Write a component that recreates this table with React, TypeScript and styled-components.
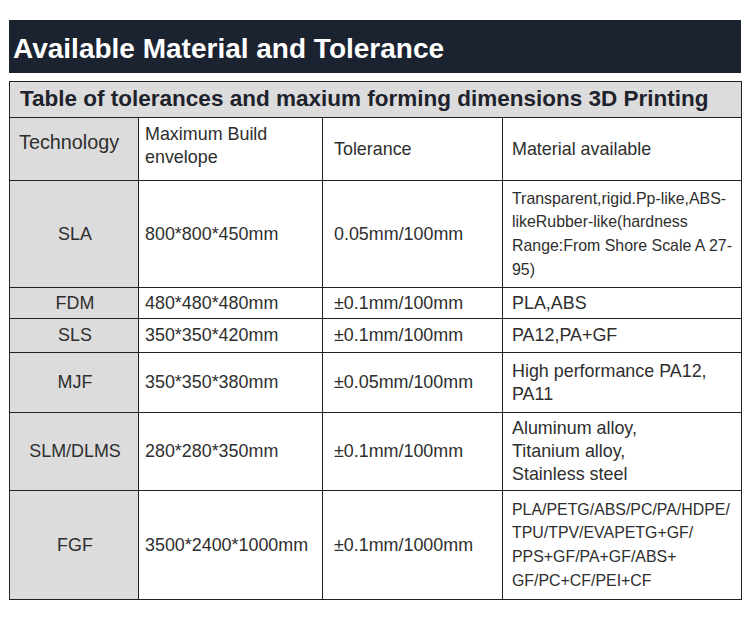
import styled, { createGlobalStyle } from "styled-components";

const GlobalStyle = createGlobalStyle`
  body {
    margin: 0;
    background: #ffffff;
    font-family: "Liberation Sans", Arial, sans-serif;
  }
`;

const Page = styled.div`
  width: 750px;
  height: 617px;
  padding: 20px 9px 0;
  box-sizing: border-box;
  background: #ffffff;
`;

const TitleBar = styled.h1`
  margin: 0;
  height: 53px;
  background: #1c2330;
  color: #ffffff;
  font-size: 28px;
  font-weight: 700;
  line-height: 57px;
  padding-left: 4px;
  box-sizing: border-box;
`;

const Table = styled.table`
  margin-top: 8px;
  width: 732px;
  border-collapse: collapse;
  table-layout: fixed;
  color: #2e2e2e;
  font-size: 17.9px;
`;

const Caption = styled.th`
  background: #dcdcdc;
  border: 1px solid #1e1f28;
  height: 36px;
  padding: 0 0 2px 10px;
  text-align: left;
  font-size: 22.5px;
  font-weight: 700;
  color: #1e222c;
  box-sizing: border-box;
  white-space: nowrap;
`;

const Cell = styled.td<{
  $grey?: boolean;
  $center?: boolean;
  $pad?: number;
  $size?: number;
  $lh?: number;
  $lift?: number;
}>`
  border: 1px solid #1e1f28;
  background: ${(p) => (p.$grey ? "#dcdcdc" : "#ffffff")};
  text-align: ${(p) => (p.$center ? "center" : "left")};
  padding: 0 4px ${(p) => p.$lift ?? 0}px ${(p) => p.$pad ?? 6}px;
  font-size: ${(p) => p.$size ?? 17.9}px;
  line-height: ${(p) => p.$lh ?? 23}px;
  vertical-align: middle;
  box-sizing: border-box;
`;

const Row = styled.tr<{ $h: number }>`
  height: ${(p) => p.$h}px;
`;

type Item = {
  tech: string;
  size: string;
  tol: string;
  mat: string[];
  h: number;
  small?: boolean;
};

const rows: Item[] = [
  {
    tech: "SLA",
    size: "800*800*450mm",
    tol: "0.05mm/100mm",
    mat: ["Transparent,rigid.Pp-like,ABS-", "likeRubber-like(hardness", "Range:From Shore Scale A 27-", "95)"],
    h: 107,
    small: true,
  },
  { tech: "FDM", size: "480*480*480mm", tol: "±0.1mm/100mm", mat: ["PLA,ABS"], h: 31 },
  { tech: "SLS", size: "350*350*420mm", tol: "±0.1mm/100mm", mat: ["PA12,PA+GF"], h: 34 },
  {
    tech: "MJF",
    size: "350*350*380mm",
    tol: "±0.05mm/100mm",
    mat: ["High performance PA12,", "PA11"],
    h: 60,
  },
  {
    tech: "SLM/DLMS",
    size: "280*280*350mm",
    tol: "±0.1mm/100mm",
    mat: ["Aluminum alloy,", "Titanium alloy,", "Stainless steel"],
    h: 78,
  },
  {
    tech: "FGF",
    size: "3500*2400*1000mm",
    tol: "±0.1mm/1000mm",
    mat: ["PLA/PETG/ABS/PC/PA/HDPE/", "TPU/TPV/EVAPETG+GF/", "PPS+GF/PA+GF/ABS+", "GF/PC+CF/PEI+CF"],
    h: 109,
    small: true,
  },
];

export default function App() {
  return (
    <Page>
      <GlobalStyle />
      <TitleBar>Available Material and Tolerance</TitleBar>
      <Table>
        <colgroup>
          <col style={{ width: 129 }} />
          <col style={{ width: 184 }} />
          <col style={{ width: 180 }} />
          <col style={{ width: 239 }} />
        </colgroup>
        <thead>
          <tr>
            <Caption colSpan={4}>Table of tolerances and maxium forming dimensions 3D Printing</Caption>
          </tr>
        </thead>
        <tbody>
          <Row $h={63}>
            <Cell $grey $pad={9} $size={19.8} $lift={13}>
              Technology
            </Cell>
            <Cell $lift={6}>
              Maximum Build
              <br />
              envelope
            </Cell>
            <Cell $pad={11}>Tolerance</Cell>
            <Cell $pad={9}>Material available</Cell>
          </Row>
          {rows.map((r) => (
            <Row $h={r.h} key={r.tech}>
              <Cell $grey $center>
                {r.tech}
              </Cell>
              <Cell>{r.size}</Cell>
              <Cell $pad={11}>{r.tol}</Cell>
              <Cell
                $pad={9}
                $size={r.small ? 15.9 : 17.9}
                $lh={r.small ? 23.7 : 23}
                $lift={r.small ? 0 : 0}
              >
                {r.mat.map((m, i) => (
                  <span key={i}>
                    {m}
                    {i < r.mat.length - 1 && <br />}
                  </span>
                ))}
              </Cell>
            </Row>
          ))}
        </tbody>
      </Table>
    </Page>
  );
}
